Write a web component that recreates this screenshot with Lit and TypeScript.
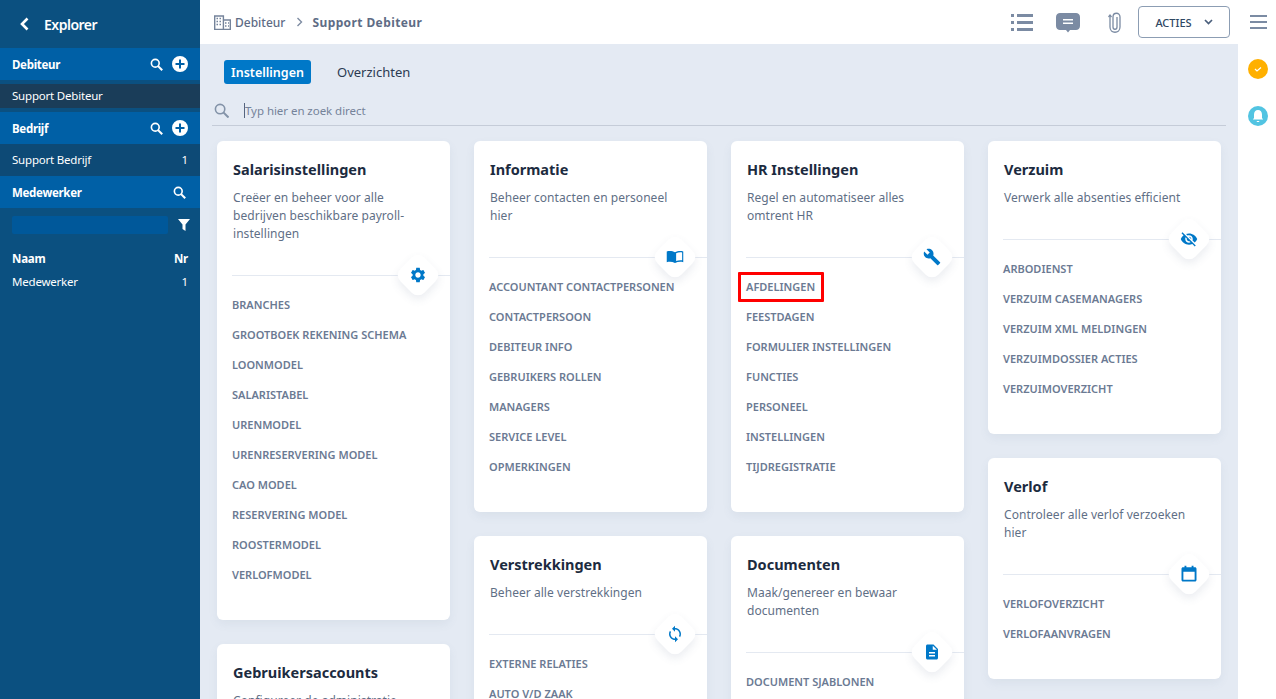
import {LitElement, css, html, svg} from 'lit'
import {customElement} from 'lit/decorators.js'

const ICONS: any = {
  gear: svg`<path d="M19.14 12.94c.04-.3.06-.61.06-.94 0-.32-.02-.64-.07-.94l2.03-1.58c.18-.14.23-.41.12-.61l-1.92-3.32c-.12-.22-.37-.29-.59-.22l-2.39.96c-.5-.38-1.03-.7-1.62-.94l-.36-2.54c-.04-.24-.24-.41-.48-.41h-3.84c-.24 0-.43.17-.47.41l-.36 2.54c-.59.24-1.13.57-1.62.94l-2.39-.96c-.22-.08-.47 0-.59.22L2.74 8.87c-.12.21-.08.47.12.61l2.03 1.58c-.05.3-.09.63-.09.94s.02.64.07.94l-2.03 1.58c-.18.14-.23.41-.12.61l1.92 3.32c.12.22.37.29.59.22l2.39-.96c.5.38 1.03.7 1.62.94l.36 2.54c.05.24.24.41.48.41h3.84c.24 0 .44-.17.47-.41l.36-2.54c.59-.24 1.13-.56 1.62-.94l2.39.96c.22.08.47 0 .59-.22l1.92-3.32c.12-.22.07-.47-.12-.61l-2.01-1.58zM12 15.6c-1.98 0-3.6-1.62-3.6-3.6s1.62-3.6 3.6-3.6 3.6 1.62 3.6 3.6-1.62 3.6-3.6 3.6z"/>`,
  book: svg`<path fill-rule="evenodd" d="M1 4.500C4 3.600 8.500 3.600 12 5.500 15.500 3.600 20 3.600 23 4.500V19c-3.500-1-7.500-.7-11 1-3.500-1.700-7.500-2-11-1zM13.500 7v10.200c2.300-.9 5-1.200 8-.9V6c-2.800-.4-5.700-.1-8 1z"/>`,
  wrench: svg`<path d="M22.700 19l-9.100-9.100c.9-2.300.4-5-1.500-6.900-2-2-5-2.400-7.400-1.300L9 6 6 9 1.600 4.700C.4 7.100.9 10.100 2.900 12.100c1.900 1.900 4.600 2.400 6.900 1.500l9.100 9.100c.4.4 1 .4 1.400 0l2.300-2.300c.5-.4.5-1.100.1-1.400z"/>`,
  eyeoff: svg`<path d="M12 7c2.760 0 5 2.240 5 5 0 .65-.13 1.260-.36 1.830l2.920 2.920c1.510-1.260 2.700-2.890 3.430-4.750-1.730-4.390-6-7.500-11-7.500-1.400 0-2.740.25-3.980.7l2.160 2.160C10.740 7.130 11.350 7 12 7zM2 4.270l2.280 2.280.46.46C3.080 8.300 1.780 10.020 1 12c1.730 4.390 6 7.500 11 7.500 1.550 0 3.030-.3 4.380-.84l.42.42L19.730 22 21 20.730 3.270 3 2 4.270zM7.530 9.800l1.550 1.550c-.05.21-.08.43-.08.65 0 1.660 1.340 3 3 3 .22 0 .44-.03.65-.08l1.550 1.550c-.67.33-1.410.53-2.200.53-2.760 0-5-2.240-5-5 0-.79.2-1.530.53-2.200zm4.310-.78l3.150 3.150.02-.16c0-1.660-1.340-3-3-3l-.17.01z"/>`,
  sync: svg`<path d="M12 4V1L8 5l4 4V6c3.310 0 6 2.690 6 6 0 1.010-.25 1.970-.7 2.800l1.460 1.460C19.540 15.030 20 13.570 20 12c0-4.420-3.580-8-8-8zm0 14c-3.310 0-6-2.690-6-6 0-1.010.25-1.970.7-2.800L5.240 7.740C4.460 8.970 4 10.430 4 12c0 4.420 3.580 8 8 8v3l4-4-4-4v3z"/>`,
  doc: svg`<path d="M14 2H6c-1.100 0-1.990.9-1.990 2L4 20c0 1.100.89 2 1.990 2H18c1.100 0 2-.9 2-2V8l-6-6zm2 16H8v-2h8v2zm0-4H8v-2h8v2zm-3-5V3.500L18.500 9H13z"/>`,
  calendar: svg`<path fill-rule="evenodd" d="M6 1h2.500v2h7V1H18v2h2c1.100 0 2 .9 2 2v15c0 1.100-.9 2-2 2H4c-1.100 0-2-.9-2-2V5c0-1.100.9-2 2-2h2zM4.500 9v10.500h15V9z"/>`,
}

const search = (size: number, solo = false) => html`<svg class="ic ${solo ? 'solo' : ''}" width=${size} height=${size} viewBox="0 0 16 16" fill="none" stroke="currentColor" stroke-width="2"><circle cx="6.500" cy="6.500" r="4.800"/><path d="M10 10l5 5" stroke-width="2.600"/></svg>`

const plus = html`<svg class="ic" width="16" height="16" viewBox="0 0 16 16"><path fill="#fff" fill-rule="evenodd" d="M8 0a8 8 0 1 1 0 16A8 8 0 0 1 8 0zM7 3.500v3.500H3.500v2H7v3.500h2V9h3.500V7H9V3.500z"/></svg>`

const COL_1 = [
  {title: 'Salarisinstellingen', desc: 'Creëer en beheer voor alle bedrijven beschikbare payroll-instellingen', icon: 'gear',
    items: ['BRANCHES', 'GROOTBOEK REKENING SCHEMA', 'LOONMODEL', 'SALARISTABEL', 'URENMODEL', 'URENRESERVERING MODEL', 'CAO MODEL', 'RESERVERING MODEL', 'ROOSTERMODEL', 'VERLOFMODEL']},
  {title: 'Gebruikersaccounts', desc: 'Configureer de administratie', icon: 'gear', items: []},
]
const COL_2 = [
  {title: 'Informatie', desc: 'Beheer contacten en personeel hier', icon: 'book',
    items: ['ACCOUNTANT CONTACTPERSONEN', 'CONTACTPERSOON', 'DEBITEUR INFO', 'GEBRUIKERS ROLLEN', 'MANAGERS', 'SERVICE LEVEL', 'OPMERKINGEN']},
  {title: 'Verstrekkingen', desc: 'Beheer alle verstrekkingen', icon: 'sync', items: ['EXTERNE RELATIES', 'AUTO V/D ZAAK']},
]
const COL_3 = [
  {title: 'HR Instellingen', desc: 'Regel en automatiseer alles omtrent HR', icon: 'wrench',
    items: ['AFDELINGEN', 'FEESTDAGEN', 'FORMULIER INSTELLINGEN', 'FUNCTIES', 'PERSONEEL', 'INSTELLINGEN', 'TIJDREGISTRATIE']},
  {title: 'Documenten', desc: 'Maak/genereer en bewaar documenten', icon: 'doc', items: ['DOCUMENT SJABLONEN']},
]
const COL_4 = [
  {title: 'Verzuim', desc: 'Verwerk alle absenties efficient', icon: 'eyeoff',
    items: ['ARBODIENST', 'VERZUIM CASEMANAGERS', 'VERZUIM XML MELDINGEN', 'VERZUIMDOSSIER ACTIES', 'VERZUIMOVERZICHT']},
  {title: 'Verlof', desc: 'Controleer alle verlof verzoeken hier', icon: 'calendar', items: ['VERLOFOVERZICHT', 'VERLOFAANVRAGEN']},
]

@customElement('app-root')
export class AppRoot extends LitElement {

  static styles = css`
    :host {
      display: flex;
      width: 100%;
      height: 699px;
      overflow: hidden;
      font-family: "Noto Sans", "Open Sans", sans-serif;
      font-size: 12px;
      color: #2b3a52;
    }

    .ic { display: block; flex: none; }

    /* sidebar */
    .side {
      width: 200px;
      flex: none;
      background: #0b5080;
      color: #fff;
      font-size: 11.500px;
      letter-spacing: -.2px;
    }
    .explorer {
      height: 48px;
      display: flex;
      align-items: center;
      padding-left: 20px;
      gap: 15px;
      font-size: 14px;
      font-weight: 600;
      letter-spacing: -.5px;
    }
    .sec {
      height: 32px;
      display: flex;
      align-items: center;
      padding: 0 12px;
      background: #0060a6;
      font-weight: 700;
      letter-spacing: -.3px;
      gap: 9px;
    }
    .sec span { flex: 1; }
    .sec .solo { margin-right: 2px; }
    .sel {
      height: 24px;
      margin: 4px 0;
      padding: 0 12px 1px;
      box-sizing: border-box;
      display: flex;
      align-items: center;
      background: #1a3d59;
    }
    .row {
      height: 32px;
      padding: 0 12px 1px;
      box-sizing: border-box;
      display: flex;
      align-items: center;
      justify-content: space-between;
      background: #0d4a76;
    }
    .filter {
      display: flex;
      align-items: center;
      padding: 8px 10px 0 12px;
      justify-content: space-between;
    }
    .filter div {
      width: 156px;
      height: 18px;
      border-radius: 2px;
      background: #00589a;
    }
    .thead, .tbody {
      display: flex;
      justify-content: space-between;
      padding: 0 12px;
    }
    .thead { margin-top: 16px; font-weight: 700; line-height: 18px; }
    .tbody { margin-top: 5px; line-height: 18px; }

    /* rechts */
    .content {
      flex: 1;
      min-width: 0;
      display: flex;
      flex-direction: column;
    }
    .top {
      height: 44px;
      flex: none;
      background: #fff;
      display: flex;
      align-items: center;
      padding: 0 9px 0 14px;
      color: #6b7a93;
    }
    .crumb { display: flex; align-items: center; font-size: 12px; font-weight: 500; color: #5e6c85; }
    .crumb b { font-weight: 700; letter-spacing: .4px; }
    .crumb .sep { margin: 0 9px 0 11px; }
    .crumb .bld { margin-right: 4px; }
    .tools { margin-left: auto; display: flex; align-items: center; }
    .acties {
      width: 90px;
      height: 30px;
      margin-left: 15px;
      border: 1px solid #8c9db3;
      border-radius: 4px;
      display: flex;
      align-items: center;
      justify-content: center;
      gap: 12px;
      font-size: 11px;
      font-weight: 500;
      color: #2f4763;
    }
    .burger { margin-left: 20px; }
    .below { flex: 1; display: flex; min-height: 0; }
    .main {
      flex: 1;
      min-width: 0;
      overflow: hidden;
      background: #e4eaf3;
      padding: 16px 12px 0;
    }
    .rail {
      width: 38px;
      flex: none;
      background: #fff;
      display: flex;
      flex-direction: column;
      align-items: center;
      box-sizing: border-box;
      padding: 15px 0 0 2px;
      gap: 27px;
    }
    .tabs { display: flex; align-items: center; padding-left: 12px; gap: 26px; font-size: 13px; }
    .tab {
      height: 24px;
      width: 87px;
      display: flex;
      align-items: center;
      justify-content: center;
      border-radius: 3px;
      background: #0078c8;
      color: #fff;
      font-size: 12.500px;
      font-weight: 600;
    }
    .tab2 { color: #2b3a52; }
    .find {
      height: 32px;
      margin: 10px 0 0;
      border-bottom: 1px solid #c5ccd8;
      display: flex;
      align-items: center;
      padding: 1px 0 0 2px;
      color: #75839a;
      font-size: 11.500px;
      letter-spacing: -.05px;
      box-sizing: border-box;
    }
    .caret { width: 1px; height: 15px; background: #55657f; margin-left: 15px; }

    .cols {
      display: grid;
      grid-template-columns: repeat(4, 233px);
      gap: 24px;
      padding: 15px 0 0 5px;
      align-items: start;
    }
    .col { display: flex; flex-direction: column; gap: 24px; }
    .card {
      background: #fff;
      border-radius: 6px;
      box-shadow: 0 4px 10px rgba(90, 110, 140, .08);
      padding-top: 16px;
    }
    .card h3 {
      margin: 0;
      padding: 0 16px;
      font-size: 14.500px;
      line-height: 24px;
      font-weight: 700;
      color: #1c2b40;
    }
    .desc {
      margin: 8px 0 0;
      padding: 0 16px;
      font-size: 12px;
      line-height: 18px;
      letter-spacing: .05px;
      color: #5f6f86;
    }
    .div {
      position: relative;
      margin: 32px 0 0 15px;
      height: 1px;
      background: #e4e9f1;
    }
    .diamond {
      position: absolute;
      right: 15px;
      top: -17px;
      width: 34px;
      height: 34px;
      border-radius: 9px;
      transform: rotate(45deg);
      background: #fff;
      box-shadow: 3px 3px 8px rgba(90, 110, 140, .12);
      display: flex;
      align-items: center;
      justify-content: center;
    }
    .diamond svg { transform: rotate(-45deg); fill: #0078c8; }
    .items { list-style: none; margin: 0; padding: 14px 0 30px 15px; }
    .items li {
      height: 30px;
      line-height: 30px;
      font-size: 11px;
      font-weight: 600;
      color: #6b7a93;
      position: relative;
    }
    .items li.hit::after {
      content: '';
      position: absolute;
      left: -8px;
      top: 0;
      width: 86px;
      height: 30px;
      box-sizing: border-box;
      border: 3px solid #f00;
      border-radius: 1px;
    }
  `

  _card(c: any) {
    return html`
      <div class="card">
        <h3>${c.title}</h3>
        <p class="desc">${c.desc}</p>
        <div class="div">
          <div class="diamond"><svg width="18" height="18" viewBox="0 0 24 24">${ICONS[c.icon]}</svg></div>
        </div>
        <ul class="items">
          ${c.items.map((i: string) => html`<li class=${i === 'AFDELINGEN' ? 'hit' : ''}>${i}</li>`)}
        </ul>
      </div>
    `
  }

  render() {
    return html`
      <aside class="side">
        <div class="explorer">
          <svg class="ic" width="9" height="14" viewBox="0 0 9 14" fill="none" stroke="#fff" stroke-width="2.600"><path d="M7.500 1.500L2 7l5.500 5.500"/></svg>
          Explorer
        </div>
        <div class="sec"><span>Debiteur</span>${search(13)}${plus}</div>
        <div class="sel">Support Debiteur</div>
        <div class="sec"><span>Bedrijf</span>${search(13)}${plus}</div>
        <div class="row"><span>Support Bedrijf</span><span>1</span></div>
        <div class="sec"><span>Medewerker</span>${search(13, true)}</div>
        <div class="filter">
          <div></div>
          <svg class="ic" width="12" height="12" viewBox="0 0 12 12" fill="#fff"><path d="M0 0h12L7.500 5.500V12l-3-2V5.500z"/></svg>
        </div>
        <div class="thead"><span>Naam</span><span>Nr</span></div>
        <div class="tbody"><span>Medewerker</span><span>1</span></div>
      </aside>
      <div class="content">
        <header class="top">
          <div class="crumb">
            <svg class="ic bld" width="17" height="15" viewBox="0 0 17 15" fill="none" stroke="#74839a" stroke-width="1.400">
              <path d="M.7 14.400V1h8.700v13.400M9.400 5h6.900v9.400M0 14.400h17"/>
              <path d="M2.500 3.500h1.500M5.500 3.500h1.500M2.500 6.500h1.500M5.500 6.500h1.500M2.500 9.500h1.500M5.500 9.500h1.500M11 8h1.500M14 8h1M11 11h1.500M14 11h1" stroke-width="1.600"/>
            </svg>
            Debiteur
            <svg class="ic sep" width="7" height="10" viewBox="0 0 7 10" fill="none" stroke="#7e8ca2" stroke-width="1.400"><path d="M1.500 1l4 4-4 4"/></svg>
            <b>Support Debiteur</b>
          </div>
          <div class="tools">
            <svg class="ic" width="22" height="17" viewBox="0 0 22 17" fill="#7b8ba3"><path d="M0 0h3v3H0zM6 0h16v3H6zM0 7h3v3H0zM6 7h16v3H6zM0 14h3v3H0zM6 14h16v3H6z"/></svg>
            <svg class="ic" style="margin-left:23px" width="24" height="21" viewBox="0 0 24 21"><path fill="#7b8ba3" fill-rule="evenodd" d="M4 1h16c2 0 4 1.500 4 4v9c0 2.500-2 4-4 4h-6l-2 2.500-2-2.500H4c-2 0-4-1.500-4-4V5c0-2.500 2-4 4-4zM7 7v1.500h10V7zM7 10.500V12h10v-1.500z"/></svg>
            <svg class="ic" style="margin-left:28px" width="15" height="21" viewBox="0 0 15 21" fill="none" stroke="#7b8ba3" stroke-width="1.300"><path d="M2 4l0 11c0 7 10 7 10 0V5c0-5-7-5-7 0v10c0 3 4 3 4 0V5"/><path d="M.5 5L2 3l1.500 2"/></svg>
            <div class="acties">ACTIES
              <svg class="ic" width="9" height="6" viewBox="0 0 9 6" fill="none" stroke="#4a5f7c" stroke-width="1.700"><path d="M1 1l3.500 3.500L8 1"/></svg>
            </div>
            <svg class="ic burger" width="17" height="14" viewBox="0 0 17 14" fill="#7b8ba3"><path d="M0 0h17v2H0zM0 6h17v2H0zM0 12h17v2H0z"/></svg>
          </div>
        </header>
        <div class="below">
          <main class="main">
            <div class="tabs"><div class="tab">Instellingen</div><div class="tab2">Overzichten</div></div>
            <div class="find">
              <svg class="ic" width="15" height="15" viewBox="0 0 16 16" fill="none" stroke="#8393a8" stroke-width="1.700"><circle cx="6.500" cy="6.500" r="5"/><path d="M10 10l5.500 5.500" stroke-width="2.200"/></svg>
              <div class="caret"></div>
              <span>Typ hier en zoek direct</span>
            </div>
            <div class="cols">
              ${[COL_1, COL_2, COL_3, COL_4].map(col => html`<div class="col">${col.map(c => this._card(c))}</div>`)}
            </div>
          </main>
          <div class="rail">
            <svg class="ic" width="20" height="20" viewBox="0 0 20 20"><circle cx="10" cy="10" r="10" fill="#ffb000"/><path d="M7 10l2 2 4-3.500" fill="none" stroke="#fff" stroke-width="1.200"/></svg>
            <svg class="ic" width="20" height="20" viewBox="0 0 20 20"><circle cx="10" cy="10" r="10" fill="#52c4e2"/><path fill="#fff" d="M10 4c2.500 0 4 2 4 4.500V12l1.200 1.500H4.800L6 12V8.500C6 6 7.500 4 10 4zM8.800 15h2.400v1H8.800z"/></svg>
          </div>
        </div>
      </div>
    `
  }
}
